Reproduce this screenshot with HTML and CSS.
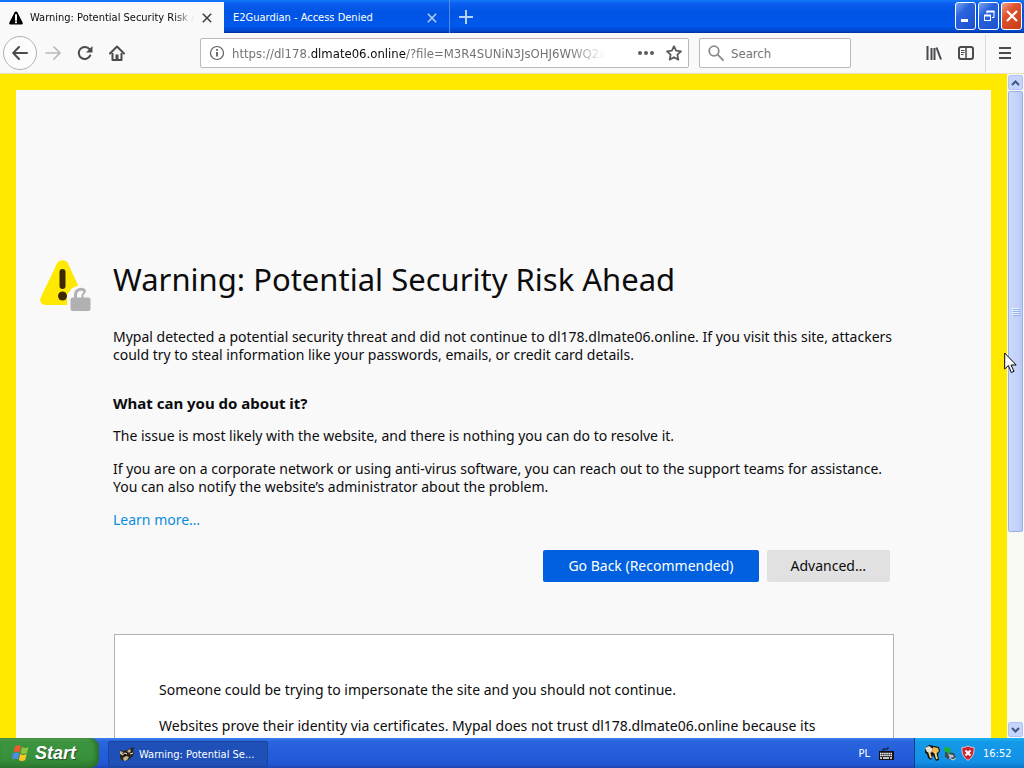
FILE: index.html
```html
<!DOCTYPE html>
<html lang="en">
<head>
    <meta charset="UTF-8">
    <meta name="viewport" content="width=device-width, initial-scale=1.0">
    <title>Warning: Potential Security Risk Ahead</title>
    <link rel="stylesheet" href="styles.css">
</head>
<body>
    <header class="titlebar">
        <div class="tab active">
            <svg class="tab-icon" width="14" height="14" viewBox="0 0 14 14">
                <path d="M7 0.5c.7 0 1.200.4 1.500 1L13.600 11.500c.5 1-.1 2-1.200 2H1.600c-1.100 0-1.700-1-1.200-2L5.500 1.500c.3-.6.8-1 1.500-1z" fill="#000"/>
                <path d="M7 4v5" stroke="#fff" stroke-width="2" stroke-linecap="round"/>
                <circle cx="7" cy="11.300" r="1.100" fill="#fff"/>
            </svg>
            <span class="tab-title">Warning: Potential Security Risk Ahead</span>
            <button class="tab-close" aria-label="Close tab">
                <svg width="10" height="10" viewBox="0 0 10 10"><path d="M.8.8l8.400 8.400M9.200.8L.8 9.200" stroke="currentColor" stroke-width="1.500"/></svg>
            </button>
        </div>
        <div class="tab">
            <span class="tab-title">E2Guardian - Access Denied</span>
            <button class="tab-close" aria-label="Close tab">
                <svg width="10" height="10" viewBox="0 0 10 10"><path d="M.8.8l8.400 8.400M9.200.8L.8 9.200" stroke="currentColor" stroke-width="1.500"/></svg>
            </button>
        </div>
        <button class="new-tab" aria-label="New tab">
            <svg width="14" height="14" viewBox="0 0 14 14"><path d="M7 0v14M0 7h14" stroke="currentColor" stroke-width="2"/></svg>
        </button>
        <div class="window-buttons">
            <button class="window-button" aria-label="Minimize">
                <svg width="18" height="24" viewBox="0 0 18 24"><path d="M4 16.500h7" stroke="#fff" stroke-width="3"/></svg>
            </button>
            <button class="window-button" aria-label="Restore">
                <svg width="18" height="24" viewBox="0 0 18 24" fill="none" stroke="#fff"><path d="M7 9.500V7.500h7v6h-2"/><path d="M6.500 7.500h8" stroke-width="2"/><rect x="4.500" y="11.500" width="6" height="5"/><path d="M4 11.500h7" stroke-width="2"/></svg>
            </button>
            <button class="window-button close" aria-label="Close">
                <svg width="18" height="24" viewBox="0 0 18 24"><path d="M4 7l10 10M14 7L4 17" stroke="#fff" stroke-width="2.200"/></svg>
            </button>
        </div>
    </header>

    <nav class="toolbar">
        <button class="tool back" aria-label="Back">
            <svg width="16" height="16" viewBox="0 0 16 16" fill="none" stroke="currentColor" stroke-width="2" stroke-linecap="round" stroke-linejoin="round"><path d="M7 2L1.200 8 7 14M1.500 8H15"/></svg>
        </button>
        <button class="tool forward" aria-label="Forward" disabled>
            <svg width="16" height="16" viewBox="0 0 16 16" fill="none" stroke="currentColor" stroke-width="1.700" stroke-linecap="round" stroke-linejoin="round"><path d="M9 2l6 6-6 6M14.500 8H1"/></svg>
        </button>
        <button class="tool" aria-label="Reload">
            <svg width="16" height="16" viewBox="0 0 16 16"><path d="M13.200 10.500A6 6 0 1 1 12.500 4.200" fill="none" stroke="currentColor" stroke-width="2" stroke-linecap="round"/><path d="M15.500 1v6.500H9z" fill="currentColor"/></svg>
        </button>
        <button class="tool" aria-label="Home">
            <svg width="16" height="16" viewBox="0 0 16 16"><path d="M1 8.500L8 1.500l7 7" fill="none" stroke="currentColor" stroke-width="2" stroke-linecap="round" stroke-linejoin="round"/><path d="M3.500 8v7h9V8" fill="none" stroke="currentColor" stroke-width="2" stroke-linejoin="round"/><path d="M6.500 15V9.500h3V15z" fill="currentColor"/></svg>
        </button>
        <div class="url-bar">
            <svg width="16" height="16" viewBox="0 0 16 16" fill="none" stroke="#5c5c60"><circle cx="8" cy="8" r="6.500" stroke-width="1.200"/><path d="M8 7v4.500M8 4v1.800" stroke-width="1.800"/></svg>
            <a class="url" href="#">https://dl178.<span class="domain">dlmate06.online</span>/?file=M3R4SUNiN3JsOHJ6WWQ2azZ5</a>
            <button class="url-action" aria-label="Page actions">
                <svg width="16" height="16" viewBox="0 0 16 16" fill="currentColor"><circle cx="2" cy="8" r="2"/><circle cx="8" cy="8" r="2"/><circle cx="14" cy="8" r="2"/></svg>
            </button>
            <button class="url-action" aria-label="Bookmark this page">
                <svg width="16" height="16" viewBox="0 0 16 16" fill="none" stroke="currentColor" stroke-width="1.800" stroke-linejoin="round"><path d="M8 1.200l2.100 4.500 4.900.6-3.600 3.400.9 4.900L8 12.200l-4.300 2.400.9-4.900L1 6.300l4.900-.6z"/></svg>
            </button>
        </div>
        <div class="search-bar">
            <svg width="16" height="16" viewBox="0 0 16 16" fill="none" stroke="#8c8c8c" stroke-width="1.800" stroke-linecap="round"><circle cx="6" cy="6" r="4.800"/><path d="M9.700 9.700L15 15"/></svg>
            <input class="search-input" type="text" placeholder="Search" aria-label="Search">
        </div>
        <button class="tool library" aria-label="Library">
            <svg width="16" height="16" viewBox="0 0 16 16" fill="none" stroke="currentColor" stroke-width="2"><path d="M1.500 1v14M5.500 3v12M8.500 3v12M10.500 2.500L15 14.500"/></svg>
        </button>
        <button class="tool" aria-label="Sidebars">
            <svg width="16" height="16" viewBox="0 0 16 16" fill="none" stroke="currentColor"><rect x="1" y="2" width="14" height="12" rx="2" stroke-width="2"/><path d="M8 2v12" stroke-width="1.500"/><path d="M3 5.500h3.500M3 7.500h3.500M3 9.500h2.500"/></svg>
        </button>
        <button class="tool menu" aria-label="Open menu">
            <svg width="16" height="16" viewBox="0 0 16 16" stroke="currentColor" stroke-width="2"><path d="M2 3h12M2 8h12M2 13h12"/></svg>
        </button>
    </nav>

    <div class="viewport">
        <main class="page">
            <div class="container">
                <div class="heading">
                    <svg width="52" height="52" viewBox="0 0 52 52">
                        <path d="M17 4.500C19 .2 26 .2 28 4.500L43 37c2 5-1 9-5 9H6c-5 0-7-4-5-8z" fill="#ffe900"/>
                        <path d="M22.500 13v14" stroke="#3e2800" stroke-width="6" stroke-linecap="round"/>
                        <circle cx="22.500" cy="37" r="4.500" fill="#3e2800"/>
                        <path d="M27 48V36l5-7 8-3 7 4 4 8v10z" fill="#f9f9fa"/>
                        <rect x="30.500" y="38.500" width="20" height="13.500" rx="2" fill="#b1b1b3"/>
                        <path d="M35.500 39v-3.500a5.500 5.500 0 0 1 9.500-3.500" fill="none" stroke="#b1b1b3" stroke-width="3"/>
                        <path d="M45.500 32l-3 4v3" stroke="#b1b1b3" stroke-width="2" fill="none"/>
                    </svg>
                    <h1>Warning: Potential Security Risk Ahead</h1>
                </div>
                <p class="intro">Mypal detected a potential security threat and did not continue to dl178.dlmate06.online. If you visit this site, attackers could try to steal information like your passwords, emails, or credit card details.</p>
                <h2>What can you do about it?</h2>
                <p>The issue is most likely with the website, and there is nothing you can do to resolve it.</p>
                <p>If you are on a corporate network or using anti-virus software, you can reach out to the support teams for assistance. You can also notify the website’s administrator about the problem.</p>
                <p><a class="learn-more" href="#">Learn more…</a></p>
                <div class="actions">
                    <button class="btn primary">Go Back (Recommended)</button>
                    <button class="btn">Advanced…</button>
                </div>
            </div>
            <section class="advanced-panel">
                <p>Someone could be trying to impersonate the site and you should not continue.</p>
                <p>Websites prove their identity via certificates. Mypal does not trust dl178.dlmate06.online because its certificate issuer is unknown, the certificate is self-signed, or the server is not sending the correct intermediate certificates.</p>
            </section>
        </main>
        <div class="scrollbar">
            <button class="scroll-button" aria-label="Scroll up">
                <svg width="9" height="6" viewBox="0 0 9 6"><path d="M1 5l3.500-3.500L8 5" fill="none" stroke="#3f5684" stroke-width="2"/></svg>
            </button>
            <div class="scroll-track">
                <div class="scroll-thumb">
                    <svg width="8" height="8" viewBox="0 0 8 8"><path d="M0 .5h7M0 2.500h7M0 4.500h7M0 6.500h7" stroke="#eef4fe"/><path d="M1 1.500h7M1 3.500h7M1 5.500h7M1 7.500h7" stroke="#8cb0f8"/></svg>
                </div>
            </div>
            <button class="scroll-button" aria-label="Scroll down">
                <svg width="9" height="6" viewBox="0 0 9 6"><path d="M1 1l3.500 3.500L8 1" fill="none" stroke="#3f5684" stroke-width="2"/></svg>
            </button>
        </div>
        <svg class="cursor" width="14" height="22" viewBox="0 0 14 22"><path d="M.7 1v16l3.700-3.500L7.300 20.500l2.700-1.200-3-6.300h5.200z" fill="#fff" stroke="#000"/></svg>
    </div>

    <footer class="taskbar">
        <button class="start">
            <svg width="20" height="20" viewBox="0 0 20 20">
                <path d="M4 3.500c2-1.500 4-1.500 6-.2L8.500 9.500c-2-1.200-4-1.200-6 0z" fill="#f0592b"/>
                <path d="M11 4c2 1.200 4 1.200 6.500 0L16 10c-2.200 1.200-4.500 1.200-6.500 0z" fill="#8cc63f"/>
                <path d="M2.200 10.500c2-1.200 4-1.200 6 0L6.800 16.500c-2-1.200-4-1.200-6 .2z" fill="#4b8df0"/>
                <path d="M9.200 11c2 1.200 4.200 1.200 6.500 0l-1.500 6c-2.200 1.300-4.500 1.300-6.400 0z" fill="#fcc824"/>
            </svg>
            Start
        </button>
        <button class="task">
            <svg width="16" height="16" viewBox="0 0 16 16">
                <path d="M1 4l3 1 4-1 4-2 3-1-1 4 1 3-2 3-4 3-5 1-3-3z" fill="#2b2418"/>
                <path d="M1 5l3 1-1 3-2-1zM8 5l3-2 1 2-2 2zM4 12l3-2 3 1-2 3-3 1z" fill="#c9b58c"/>
                <path d="M3 9l3-2 2 1M11 8l3-1" stroke="#f4ead2" fill="none"/>
                <circle cx="6" cy="9" r="1" fill="#000"/>
            </svg>
            Warning: Potential Se...
        </button>
        <div class="language">
            <span>PL</span>
            <svg width="16" height="13" viewBox="0 0 16 13"><path d="M5 4V2h5V0" fill="none" stroke="#111"/><rect x="1" y="4" width="15" height="9" fill="#111"/><path d="M2 6.500h12M2 8.500h12" stroke="#fff" stroke-width="1.400" stroke-dasharray="1.500 .6"/><path d="M2 11h2M5 11h6M12 11h2" stroke="#fff" stroke-width="1.400"/></svg>
        </div>
        <div class="tray">
            <svg width="16" height="16" viewBox="0 0 16 16">
                <path d="M1 3l4-3 5 1 5 1 1 4-2 3 1 6-3 1-3-6-2 5-3-2-1-4-2-1z" fill="#111"/>
                <path d="M1 3l4-2 4 3-2 4-4-1z" fill="#e9e2cc"/>
                <path d="M9 2l5 1 1 3-3 3-4-2z" fill="#efb94b"/>
                <path d="M5 7l2 6M11 7l2 7" stroke="#f3d082" stroke-width="2"/>
            </svg>
            <svg width="16" height="16" viewBox="0 0 16 16">
                <path d="M3 7l9 1 2 5-6 2-5-3z" fill="#3c4a55"/>
                <path d="M6 9l5 1 1 2-4 1z" fill="#b9c8d4"/>
                <path d="M2 2l5 1V1l2 5-3 4-1-3-3-1z" fill="#1fae3c"/>
                <path d="M7 13l4 2 3-2" stroke="#d6e2ea" fill="none"/>
            </svg>
            <svg width="16" height="16" viewBox="0 0 16 16">
                <path d="M8 1c2 1 4 1.500 6 1.500C14.500 9 12 13 8 15.300 4 13 1.500 9 2 2.500 4 2.500 6 2 8 1z" fill="#cf2031" stroke="#e9c2c7"/>
                <path d="M5.500 5.500l5 5M10.500 5.500l-5 5" stroke="#fff" stroke-width="2"/>
            </svg>
            <time>16:52</time>
        </div>
    </footer>
</body>
</html>
```
FILE: styles.css
```css
* {
    box-sizing: border-box;
}
body {
    margin: 0;
    height: 100vh;
    display: flex;
    flex-direction: column;
    overflow: hidden;
    font-family: Tahoma, "DejaVu Sans Condensed", sans-serif;
    font-size: 11px;
    color: #0c0c0d;
    background-color: #f9f9fa;
}
button {
    margin: 0;
    padding: 0;
    border: none;
    background: none;
    font: inherit;
    color: inherit;
    display: flex;
    align-items: center;
    justify-content: center;
}
svg {
    display: block;
    flex-shrink: 0;
}

/* tabs */
.titlebar {
    height: 33px;
    flex-shrink: 0;
    display: flex;
    background: linear-gradient(#1478f8 0, #0a5cf0 4px, #0054e3 12px, #0058ec 26px, #0048cc 31px, #003298 33px);
}
.tab {
    width: 226px;
    display: flex;
    align-items: center;
    padding: 2px 12px 0 9px;
    color: #fff;
    border-right: 1px solid #4d8df0;
}
.tab.active {
    width: 224px;
    margin-top: 2px;
    padding-top: 0;
    border-right: none;
    background-color: #f9f9fa;
    color: #0c0c0d;
}
.tab-icon {
    margin-right: 7px;
}
.tab-title {
    flex: 1;
    overflow: hidden;
    white-space: nowrap;
}
.tab.active .tab-title {
    -webkit-mask-image: linear-gradient(to left, transparent, #000 20px);
    mask-image: linear-gradient(to left, transparent, #000 20px);
}
.tab-close {
    width: 10px;
    height: 16px;
    margin-left: 8px;
    color: #b5d2fa;
}
.tab.active .tab-close {
    color: #3e3e42;
}
.new-tab {
    width: 32px;
    color: #b5d2fa;
}
.window-buttons {
    margin-left: auto;
    padding: 2px 2px 0 0;
    display: flex;
    gap: 2px;
}
.window-button {
    width: 21px;
    height: 28px;
    border: 1px solid #fff;
    border-radius: 3px;
    background: linear-gradient(135deg, #7ba4f0, #2a62dd 35%, #1c50cc);
}
.window-button.close {
    background: linear-gradient(135deg, #f0a48c, #df5430 35%, #c83c14);
}

/* toolbar */
.toolbar {
    height: 41px;
    flex-shrink: 0;
    display: flex;
    align-items: center;
    padding-left: 3px;
    border-bottom: 1px solid #e4dfb4;
}
.tool {
    width: 32px;
    height: 32px;
    color: #4a4a4f;
}
.tool.back {
    width: 34px;
    height: 34px;
    border: 1px solid #b1b1b3;
    border-radius: 50%;
    background-color: #fcfcfd;
}
.tool.forward {
    color: #b9b9bb;
}
.url-bar, .search-bar {
    height: 30px;
    display: flex;
    align-items: center;
    border: 1px solid #b9b9bc;
    border-radius: 2px;
    background-color: #fff;
    font-size: 13px;
}
.url-bar {
    flex: 1;
    min-width: 0;
    margin-left: 67px;
    padding: 0 6px 0 8px;
}
.url {
    flex: 1;
    margin: 0 27px 0 7px;
    overflow: hidden;
    white-space: nowrap;
    color: #737373;
    text-decoration: none;
    -webkit-mask-image: linear-gradient(to left, transparent, #000 36px);
    mask-image: linear-gradient(to left, transparent, #000 36px);
}
.domain {
    color: #0c0c0d;
}
.url-action {
    width: 28px;
    color: #5c5c60;
}
.url-action:last-child {
    width: 16px;
    margin-left: 6px;
}
.search-bar {
    width: 152px;
    margin-left: 10px;
    padding: 0 8px;
    gap: 7px;
}
.search-input {
    flex: 1;
    min-width: 0;
    padding: 0;
    border: none;
    outline: none;
    background: none;
    font: inherit;
}
.search-input::placeholder {
    color: #757575;
}
.tool.library {
    margin-left: 67px;
}
.tool.menu {
    width: 39px;
    height: 37px;
    margin-left: 3px;
    border-left: 1px solid #dcdcde;
}

/* error page */
.viewport {
    flex: 1;
    min-height: 0;
    display: flex;
    position: relative;
}
.page {
    flex: 1;
    overflow: hidden;
    padding: 169px 97px 0;
    border: 16px solid #ffe900;
    border-bottom: none;
    background-color: #f9f9fa;
    font-family: Tahoma, "Noto Sans", sans-serif;
    font-size: 14px;
    line-height: 18px;
}
.container {
    margin-right: 4px;
}
.heading {
    display: flex;
    align-items: flex-start;
    gap: 21px;
    margin-left: -73px;
    margin-bottom: 17px;
}
h1 {
    margin: 0;
    font-size: 31px;
    font-weight: normal;
    line-height: 40px;
    white-space: nowrap;
}
h2 {
    margin: 30px 0 15px;
    font-size: 15px;
    line-height: 18px;
}
.page p {
    margin: 0 0 15px;
}
.page .intro {
    margin-right: -16px;
}
.learn-more {
    color: #0a8dde;
    text-decoration: none;
}
.actions {
    display: flex;
    justify-content: flex-end;
    gap: 8px;
    margin-top: 21px;
}
.btn {
    height: 32px;
    padding: 0 24px;
    border-radius: 2px;
    background-color: #e1e1e2;
}
.btn.primary {
    padding: 0 25px;
    background-color: #0060df;
    color: #fff;
}
.advanced-panel {
    margin: 52px 0 0 1px;
    padding: 46px 44px;
    border: 1px solid #b1b1b3;
    background-color: #fff;
}
.advanced-panel p {
    margin-bottom: 18px;
}

/* scrollbar */
.scrollbar {
    width: 17px;
    display: flex;
    flex-direction: column;
    padding: 1px;
    background-color: #fafaf5;
}
.scroll-button {
    height: 15px;
    border: 1px solid #b0c4f4;
    border-radius: 2px;
    background-color: #c6d4fc;
}
.scroll-track {
    flex: 1;
    padding: 1px 0;
}
.scroll-thumb {
    height: 70%;
    display: flex;
    align-items: center;
    justify-content: center;
    border: 1px solid #98b0e8;
    border-radius: 2px;
    background: linear-gradient(to right, #ccd8fc, #c2d0fa 70%, #b6c8f6);
}
.cursor {
    position: absolute;
    right: 6px;
    top: 278px;
}

/* taskbar */
.taskbar {
    height: 30px;
    flex-shrink: 0;
    display: flex;
    color: #fff;
    background: linear-gradient(#3a80f0 0, #2c66dc 3px, #245ddb 15px, #2358d4 26px, #1c46b0 30px);
}
.start {
    width: 99px;
    padding-right: 12px;
    gap: 4px;
    border-radius: 0 9px 9px 0;
    background: linear-gradient(#5eac56 0, #3c9440 4px, #38913a 20px, #2c7a30 30px);
    box-shadow: inset -3px 0 4px #2a6c2c;
    font-family: "Liberation Sans", Arial, sans-serif;
    font-size: 18px;
    font-weight: bold;
    font-style: italic;
    text-shadow: 1px 1px 1px #24502a;
}
.task {
    width: 160px;
    height: 26px;
    margin: 3px 0 0 9px;
    padding-left: 10px;
    justify-content: flex-start;
    gap: 4px;
    border: 1px solid #1a459e;
    border-radius: 2px;
    background-color: #1e50b8;
    color: #fff;
}
.language {
    margin-left: auto;
    display: flex;
    align-items: center;
    gap: 8px;
    padding-right: 20px;
}
.tray {
    width: 110px;
    display: flex;
    align-items: center;
    gap: 2px;
    padding-left: 9px;
    border-left: 1px solid #0c3c90;
    background: linear-gradient(#1cb0f4 0, #149ae8 4px, #1290e6 24px, #0c74c8 30px);
}
.tray time {
    margin-left: 5px;
}
```
